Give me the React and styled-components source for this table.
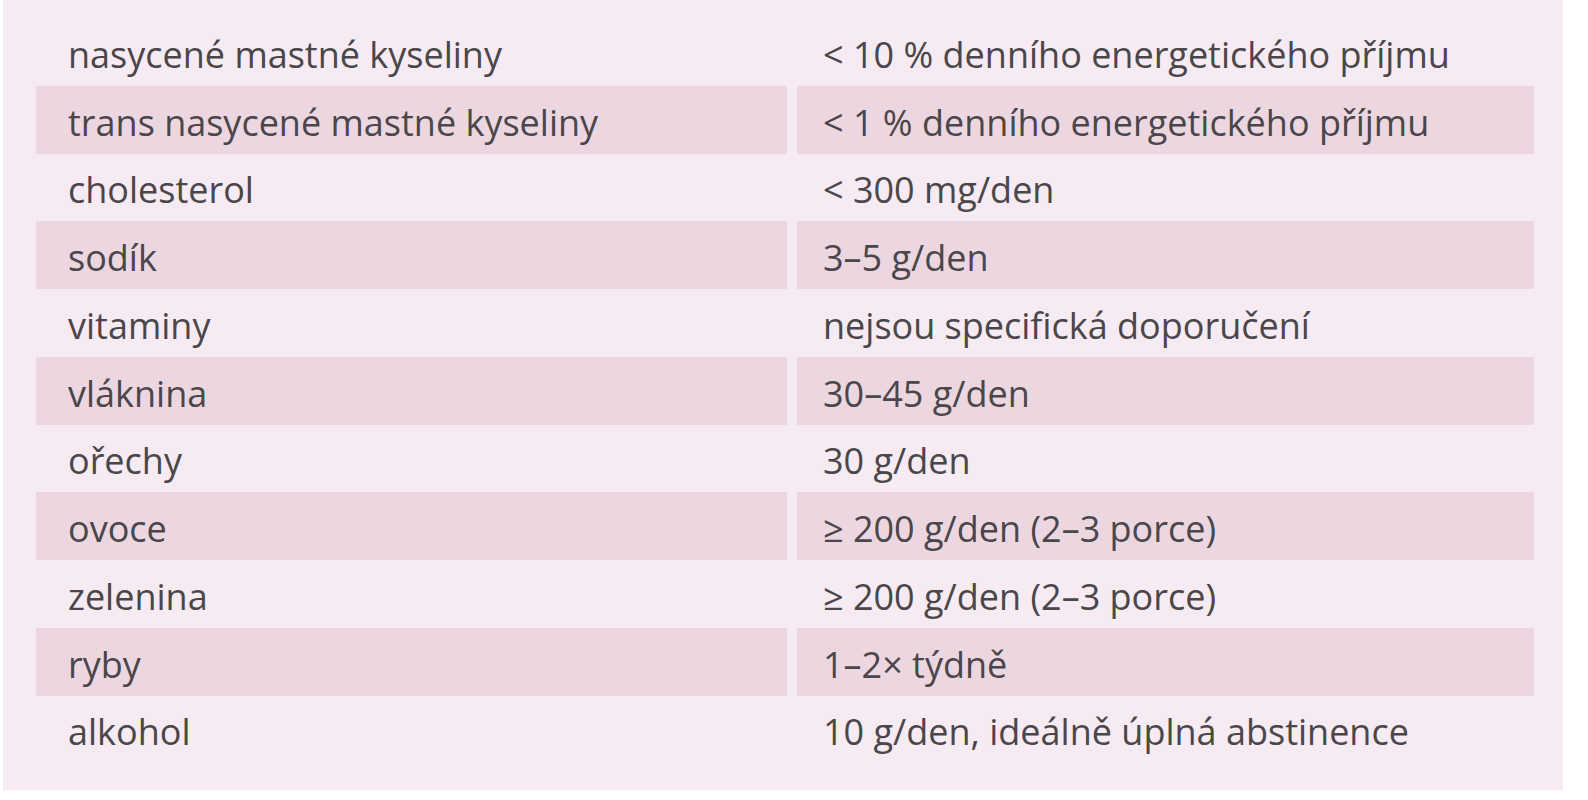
import React from 'react'
import styled, { createGlobalStyle } from 'styled-components'

const rows = [
    ['nasycené mastné kyseliny', '< 10 % denního energetického příjmu'],
    ['trans nasycené mastné kyseliny', '< 1 % denního energetického příjmu'],
    ['cholesterol', '< 300 mg/den'],
    ['sodík', '3–5 g/den'],
    ['vitaminy', 'nejsou specifická doporučení'],
    ['vláknina', '30–45 g/den'],
    ['ořechy', '30 g/den'],
    ['ovoce', '≥ 200 g/den (2–3 porce)'],
    ['zelenina', '≥ 200 g/den (2–3 porce)'],
    ['ryby', '1–2× týdně'],
    ['alkohol', '10 g/den, ideálně úplná abstinence'],
]

const GlobalStyle = createGlobalStyle`
    body {
        margin: 0;
        background: #ffffff;
        font-family: "Open Sans", "Noto Sans", sans-serif;
    }
`

function App() {
    return (
        <>
            <GlobalStyle />
            <Panel>
                <Table>
                    {rows.map(([name, value], i) => (
                        <React.Fragment key={name}>
                            <Cell $striped={i % 2 === 1} $pad={32}>{name}</Cell>
                            <Cell $striped={i % 2 === 1} $pad={26}>{value}</Cell>
                        </React.Fragment>
                    ))}
                </Table>
            </Panel>
        </>
    )
}

const Panel = styled.div`
    margin-left: 3px;
    width: 1560px;
    height: 790px;
    box-sizing: border-box;
    padding: 18px 29px 0 33px;
    background: #f6ebf2;
`

const Table = styled.div`
    display: grid;
    grid-template-columns: 751px 737px;
    grid-auto-rows: 67.75px;
    column-gap: 10px;
`

const Cell = styled.div`
    display: flex;
    align-items: center;
    box-sizing: border-box;
    padding: 5px 0 0 ${p => p.$pad}px;
    background: ${p => (p.$striped ? '#ecd7e1' : 'transparent')};
    color: #4a464a;
    font-size: 36px;
    white-space: nowrap;
`

export default App
